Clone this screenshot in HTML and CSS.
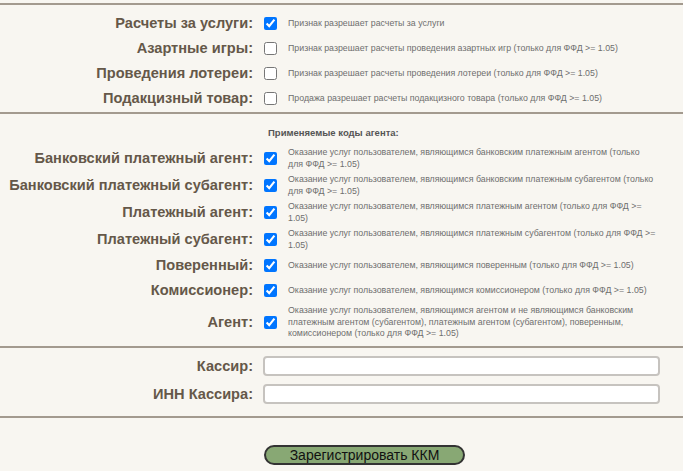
FILE: index.html
```html
<!DOCTYPE html>
<html>

<head>
    <meta charset="utf-8" />
    <title>Регистрация ККМ</title>
    <link rel="stylesheet" href="styles.css">
</head>

<body>
    <form class="kkm-form">
        <div class="section flags">
            <label class="name" for="f1">Расчеты за услуги:</label>
            <input type="checkbox" id="f1" checked>
            <span class="desc">Признак разрешает расчеты за услуги</span>

            <label class="name" for="f2">Азартные игры:</label>
            <input type="checkbox" id="f2">
            <span class="desc">Признак разрешает расчеты проведения азартных игр (только для ФФД &gt;= 1.05)</span>

            <label class="name" for="f3">Проведения лотереи:</label>
            <input type="checkbox" id="f3">
            <span class="desc">Признак разрешает расчеты проведения лотереи (только для ФФД &gt;= 1.05)</span>

            <label class="name" for="f4">Подакцизный товар:</label>
            <input type="checkbox" id="f4">
            <span class="desc">Продажа разрешает расчеты подакцизного товара (только для ФФД &gt;= 1.05)</span>
        </div>

        <div class="section agents">
            <div class="caption">Применяемые коды агента:</div>

            <label class="name" for="a1">Банковский платежный агент:</label>
            <input type="checkbox" id="a1" checked>
            <span class="desc">Оказание услуг пользователем, являющимся банковским платежным агентом (только для ФФД &gt;= 1.05)</span>

            <label class="name" for="a2">Банковский платежный субагент:</label>
            <input type="checkbox" id="a2" checked>
            <span class="desc">Оказание услуг пользователем, являющимся банковским платежным субагентом (только для ФФД &gt;= 1.05)</span>

            <label class="name" for="a3">Платежный агент:</label>
            <input type="checkbox" id="a3" checked>
            <span class="desc">Оказание услуг пользователем, являющимся платежным агентом (только для ФФД &gt;= 1.05)</span>

            <label class="name" for="a4">Платежный субагент:</label>
            <input type="checkbox" id="a4" checked>
            <span class="desc">Оказание услуг пользователем, являющимся платежным субагентом (только для ФФД &gt;= 1.05)</span>

            <label class="name" for="a5">Поверенный:</label>
            <input type="checkbox" id="a5" checked>
            <span class="desc">Оказание услуг пользователем, являющимся поверенным (только для ФФД &gt;= 1.05)</span>

            <label class="name" for="a6">Комиссионер:</label>
            <input type="checkbox" id="a6" checked>
            <span class="desc">Оказание услуг пользователем, являющимся комиссионером (только для ФФД &gt;= 1.05)</span>

            <label class="name" for="a7">Агент:</label>
            <input type="checkbox" id="a7" checked>
            <span class="desc">Оказание услуг пользователем, являющимся агентом и не являющимся банковским платежным агентом (субагентом), платежным агентом (субагентом), поверенным, комиссионером (только для ФФД &gt;= 1.05)</span>
        </div>

        <div class="section cashier">
            <label class="field-name" for="cashier">Кассир:</label>
            <input type="text" id="cashier" class="text-input">

            <label class="field-name" for="inn">ИНН Кассира:</label>
            <input type="text" id="inn" class="text-input">
        </div>

        <div class="section actions">
            <button type="submit" class="btn-register">Зарегистрировать ККМ</button>
        </div>
    </form>
</body>

</html>
```

FILE: styles.css
```css
body {
    margin: 0;
    padding-top: 3px;
    background-color: #f8f6f1;
    font-family: "Liberation Sans", Arial, sans-serif;
}

.section {
    border-top: 2px solid #a39a8f;
    display: grid;
    grid-template-columns: 253px 35px 368px;
    align-items: center;
}

.flags {
    padding: 6px 0 1px;
}

.agents {
    padding: 13px 0 4px;
}

.name {
    grid-column: 1;
    text-align: right;
    font-size: 14.6px;
    font-weight: bold;
    color: #655849;
    line-height: 25px;
}

.section input[type="checkbox"] {
    grid-column: 2;
    margin: 0 0 0 11px;
    width: 13px;
    height: 13px;
}

.desc {
    grid-column: 3;
    font-size: 8.8px;
    line-height: 11.5px;
    color: #6e6e6e;
    padding: 2px 0;
}

.caption {
    grid-column: 2 / 4;
    margin-left: 15px;
    font-size: 9.5px;
    font-weight: bold;
    color: #555;
    line-height: 12px;
    padding-bottom: 6px;
}

.cashier {
    grid-template-columns: 253px 407px;
    row-gap: 8px;
    padding: 8px 0 12px;
}

.field-name {
    text-align: right;
    font-size: 14.6px;
    font-weight: bold;
    color: #655849;
}

.text-input {
    margin-left: 10px;
    height: 20px;
    box-sizing: border-box;
    border: 2px solid #c6c3bf;
    border-radius: 4px;
    background: #fff;
    outline: none;
}

.actions {
    display: block;
    padding: 27px 0 0 264px;
}

.btn-register {
    width: 201px;
    height: 20px;
    padding: 0;
    background-color: #88a874;
    border: 2px solid #333;
    border-radius: 10px;
    font-family: "Liberation Sans", sans-serif;
    font-size: 14px;
    line-height: 16px;
    color: #111;
    cursor: pointer;
}
```
